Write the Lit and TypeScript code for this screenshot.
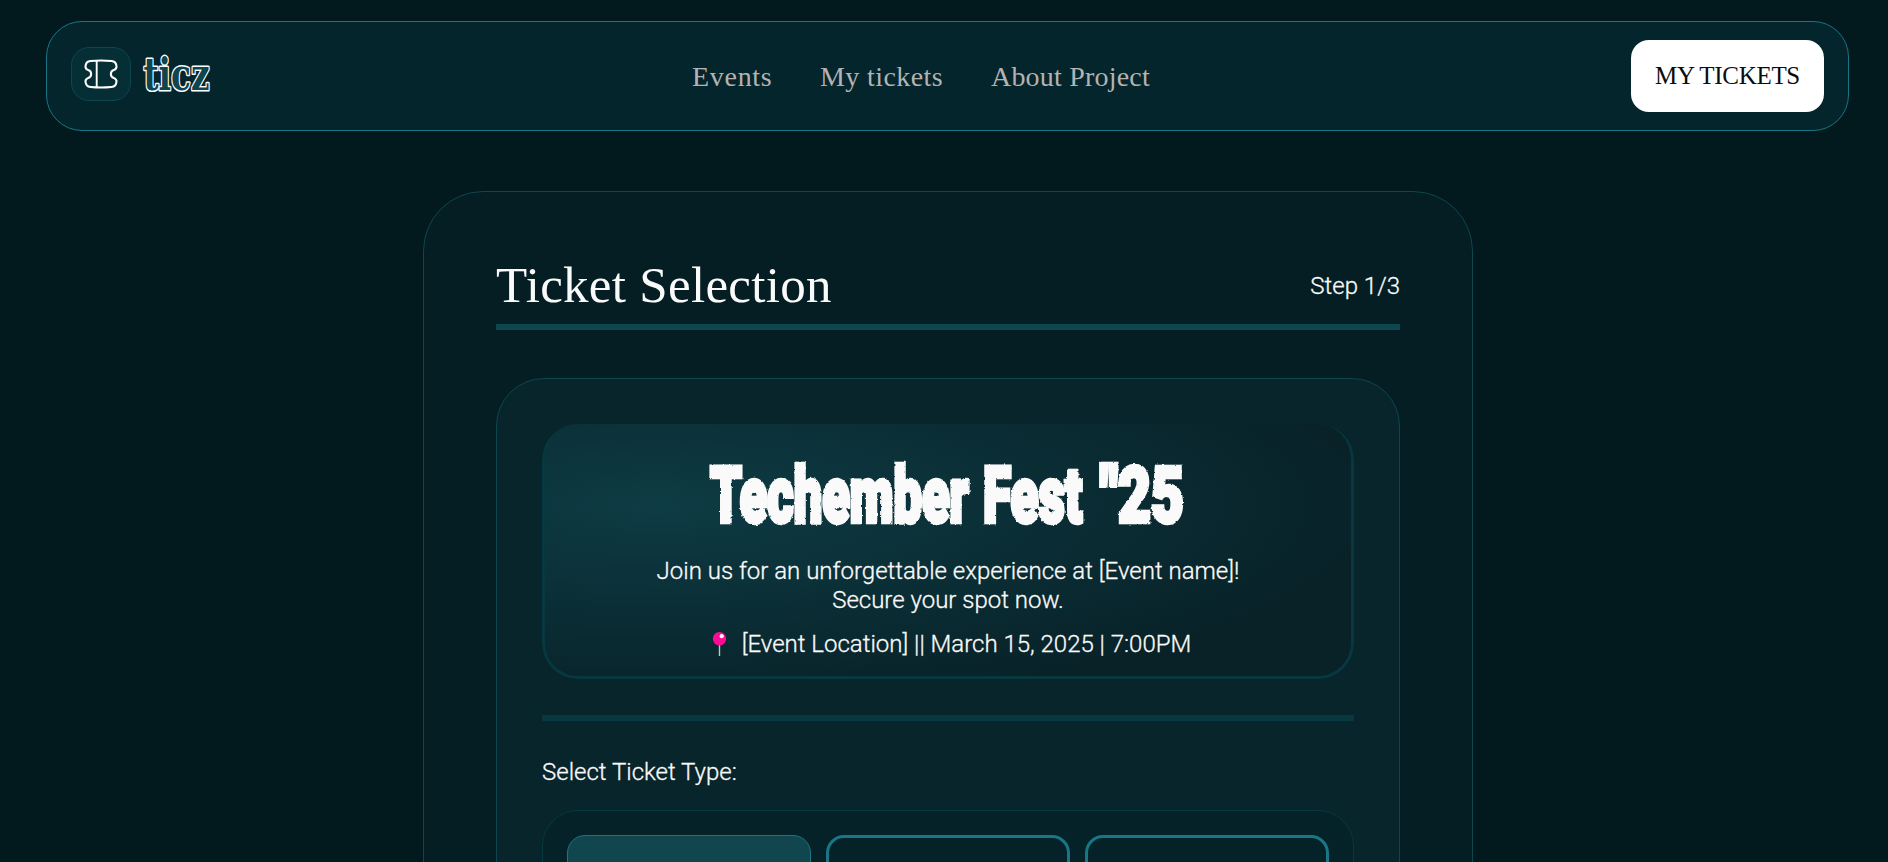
import { LitElement, html, css } from "lit";
import { customElement, state } from "lit/decorators.js";

@customElement("site-header")
class SiteHeader extends LitElement {
  static styles = css`
    :host { display: block; }
    .bar {
      box-sizing: border-box; height: 110px; padding: 0 24px;
      display: grid; grid-template-columns: 621px 1fr 193px; align-items: center;
      border: 1px solid #197686; border-radius: 36px; background: #05252c;
    }
    .brand { display: flex; align-items: center; gap: 9px; }
    .badge {
      box-sizing: border-box; width: 60px; height: 54px; border: 1.5px solid #0e464f;
      border-radius: 18px; background: #052f35; display: grid; place-items: center;
      margin-bottom: 4px;
    }
    .word { display: block; width: 74px; height: 54px; margin-bottom: 4px; overflow: visible; }
    .word text {
      font: 700 44px "DejaVu Serif", serif; fill: #0e464f; stroke: #fff;
      stroke-width: 3px; stroke-linejoin: round; paint-order: stroke;
    }
    nav { display: flex; padding-top: 2px; }
    nav a {
      font: 28px/34px "Liberation Serif", serif; color: #b3b3b3; white-space: nowrap;
    }
    .events { letter-spacing: 0.7px; width: 128px; }
    .mine { letter-spacing: 0.4px; width: 171px; }
    .about { letter-spacing: 0.2px; }
    button {
      height: 72px; border: 0; border-radius: 18px; background: #fff; color: #0a0c11;
      font: 25px/30px "Liberation Serif", serif; letter-spacing: -0.3px; padding: 0; white-space: nowrap;
    }
  `;
  render() {
    return html`<header class="bar">
      <div class="brand">
        <span class="badge">
          <svg width="34" height="30" viewBox="0 0 34 30" fill="none" stroke="#fff" stroke-width="2.100" stroke-linejoin="round">
            <path d="M6.500 2Q17 1 27.500 2C31 2.300 32.300 4 32.500 7.500C32.600 10 31.500 10.300 29.800 11A4.200 4.200 0 0 0 29.800 19C31.500 19.700 32.600 20 32.500 22.500C32.300 26 31 27.700 27.500 28Q17 29 6.500 28C3 27.700 1.700 26 1.500 22.500C1.400 20 2.500 19.700 4.200 19A4.200 4.200 0 0 0 4.200 11C2.500 10.300 1.400 10 1.500 7.500C1.700 4 3 2.300 6.500 2Z"/>
            <path d="M12.700 1.800V28.200" stroke-width="1.900"/>
          </svg>
        </span>
        <svg class="word" viewBox="0 0 74 54"><text x="3.500" y="43" textLength="66" lengthAdjust="spacingAndGlyphs">ticz</text></svg>
      </div>
      <nav><a class="events">Events</a><a class="mine">My tickets</a><a class="about">About Project</a></nav>
      <button>MY TICKETS</button>
    </header>`;
  }
}

@customElement("event-banner")
class EventBanner extends LitElement {
  static styles = css`
    :host { display: block; }
    .banner {
      box-sizing: border-box; height: 255px; padding: 33px 20px 0; text-align: center;
      border: 3px solid #07373f; border-top: 0; border-radius: 36px;
      background: radial-gradient(90% 80% at 14.02% 32.06%, rgba(36,160,181,.2) 0%, rgba(36,160,181,0) 100%), rgba(10,12,17,.1);
      color: #fafafa; font: 300 24px/29px Roboto, sans-serif; -webkit-text-stroke: 0.3px #fafafa;
    }
    .title { display: block; height: 100px; width: 490px; margin: 0 auto; overflow: visible; }
    .title text {
      font: 900 77px Roboto, sans-serif; fill: #fafafa; stroke: #fafafa;
      -webkit-text-stroke: 0; stroke-width: 4.5px; stroke-linejoin: miter;
    }
    p { margin: 0; }
    .place { display: flex; justify-content: center; align-items: center; margin-top: 15px; padding-left: 6px; }
    .place svg { margin-right: 13px; }
  `;
  render() {
    return html`<section class="banner">
      <svg class="title" viewBox="0 0 490 100">
        <defs><filter id="rough" x="-2%" y="-5%" width="104%" height="110%">
          <feTurbulence type="fractalNoise" baseFrequency="0.3" numOctaves="2" seed="4" result="n"/>
          <feDisplacementMap in="SourceGraphic" in2="n" scale="2.500" xChannelSelector="R" yChannelSelector="G"/>
        </filter></defs>
        <g filter="url(#rough)">
          <text transform="translate(7 64.500) scale(.65 1)" textLength="398" lengthAdjust="spacingAndGlyphs">Techember</text>
          <text transform="translate(280 64.500) scale(.65 1)" textLength="153" lengthAdjust="spacingAndGlyphs">Fest</text>
          <text transform="translate(397 64.500) scale(.65 1)" textLength="129" lengthAdjust="spacingAndGlyphs">"25</text>
        </g>
      </svg>
      <p>Join us for an unforgettable experience at [Event name]!<br>Secure your spot now.</p>
      <p class="place">
        <svg width="18" height="26" viewBox="0 0 18 26"><path d="M8.500 12V24" stroke="#bfc5c7" stroke-width="1.400"/><circle cx="8.500" cy="6.700" r="6.700" fill="#fc0c94"/><circle cx="10.700" cy="4.200" r="2.100" fill="#fff"/></svg>
        <span>[Event Location] || March 15, 2025 | 7:00PM</span>
      </p>
    </section>`;
  }
}

@customElement("app-root")
class AppRoot extends LitElement {
  @state() selected = 0;
  static styles = css`
    :host { display: block; height: 862px; overflow: hidden; background: #02191d; }
    .page { padding: 21px 39px 0 46px; }
    .card {
      box-sizing: border-box; width: 1050px; height: 900px; margin: 60px 0 0 377px; padding: 63px 72px 0;
      border: 1px solid #0e464f; border-radius: 60px; background: #041e23;
      color: #fafafa; font: 300 24px/29px Roboto, sans-serif;
    }
    .step, .label { -webkit-text-stroke: 0.3px #fafafa; }
    .step { padding-top: 2px; }
    .head {
      display: flex; justify-content: space-between; align-items: center;
      height: 60px; padding-bottom: 9px; border-bottom: 6px solid #0e464f;
    }
    h1 { margin: 0; font: 400 51px/60px "Liberation Serif", serif; letter-spacing: 0.3px; }
    .inner {
      box-sizing: border-box; height: 700px; margin-top: 48px; padding: 45px 45px 0;
      border: 1px solid #0e464f; border-radius: 48px; background: #08252b;
    }
    hr { height: 6px; margin: 36px 0; border: 0; background: #07373f; }
    .label { margin: 0; height: 52px; padding-top: 1px; }
    .tickets {
      box-sizing: border-box; height: 300px; padding: 24px; border: 1px solid #07373f;
      border-radius: 36px; background: #052228;
      display: grid; grid-template-columns: repeat(3, 1fr); gap: 15px;
    }
    .ticket { box-sizing: border-box; border: 3px solid #197686; border-radius: 18px; }
    .ticket.on { border-width: 1px; background: #12464e; }
  `;
  render() {
    return html`<div class="page">
      <site-header></site-header>
      <main class="card">
        <div class="head"><h1>Ticket Selection</h1><span class="step">Step 1/3</span></div>
        <div class="inner">
          <event-banner></event-banner>
          <hr>
          <p class="label">Select Ticket Type:</p>
          <div class="tickets">
            ${[0, 1, 2].map(i => html`<div class="ticket ${i === this.selected ? "on" : ""}" @click=${() => (this.selected = i)}></div>`)}
          </div>
        </div>
      </main>
    </div>`;
  }
}
